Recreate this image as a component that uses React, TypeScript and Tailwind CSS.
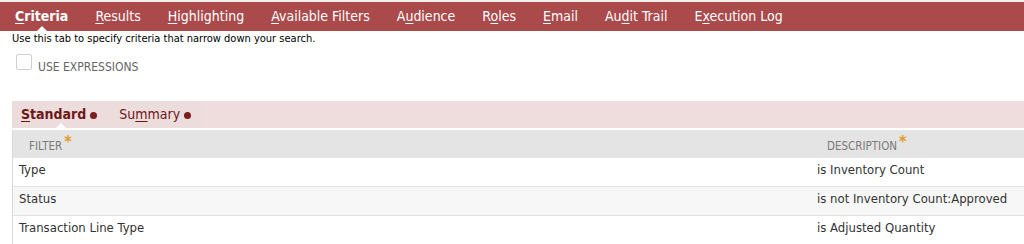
import React from "react";

const tabs: { label: string; u: number }[] = [
  { label: "Criteria", u: 0 },
  { label: "Results", u: 0 },
  { label: "Highlighting", u: 0 },
  { label: "Available Filters", u: 0 },
  { label: "Audience", u: 1 },
  { label: "Roles", u: 1 },
  { label: "Email", u: 0 },
  { label: "Audit Trail", u: 2 },
  { label: "Execution Log", u: 1 },
];

function U({ text, u }: { text: string; u: number }) {
  return (
    <>
      {text.slice(0, u)}
      <span className="underline underline-offset-2">{text[u]}</span>
      {text.slice(u + 1)}
    </>
  );
}

const rows = [
  { f: "Type", d: "is Inventory Count", bg: "bg-white" },
  { f: "Status", d: "is not Inventory Count:Approved", bg: "bg-[#f7f7f7]" },
  { f: "Transaction Line Type", d: "is Adjusted Quantity", bg: "bg-white" },
];

export default function App() {
  return (
    <div
      className="w-[1024px] h-[244px] bg-white overflow-hidden"
      style={{ fontFamily: '"DejaVu Sans Condensed", "DejaVu Sans", sans-serif' }}
    >
      <div className="h-[2px] bg-[#f6eded]" />
      <div className="h-[29px] bg-[#aa4a4b] flex items-center pl-[15px] gap-[27px] text-[14px] text-white relative whitespace-nowrap">
        {tabs.map((t, i) => (
          <span
            key={t.label}
            className={i === 0 ? "font-bold relative" : "relative"}
          >
            <U text={t.label} u={t.u} />
            {i === 0 && (
              <span className="absolute left-1/2 -translate-x-1/2 top-[20px] w-0 h-0 border-l-[6px] border-r-[6px] border-b-[6px] border-l-transparent border-r-transparent border-b-white" />
            )}
          </span>
        ))}
      </div>
      <div className="pl-[12px] pt-[1px] text-[11px] text-black leading-[13px]">
        Use this tab to specify criteria that narrow down your search.
      </div>
      <div className="flex items-center pl-[16px] mt-[9px] h-[16px]">
        <div className="w-[16px] h-[16px] border border-[#cfcfcf] rounded-[2px] bg-white" />
        <span className="ml-[6px] mt-[9px] text-[12px] text-[#666]">USE EXPRESSIONS</span>
      </div>
      <div className="ml-[12px] mt-[31px]">
        <div className="h-[27px] bg-[#efdcdc] flex items-center">
          <div className="h-full flex items-center shrink-0 whitespace-nowrap bg-[#ecdcdc] pl-[9px] w-[191px] gap-[22px] text-[14px]">
            <span className="relative font-bold text-[#6e1717]">
              <U text="Standard" u={0} />
              <span className="ml-[4px] inline-block w-[7px] h-[7px] rounded-full bg-[#7a1d1d] align-middle" />
              <span className="absolute left-[34px] top-[19px] w-0 h-0 border-l-[6px] border-r-[6px] border-b-[6px] border-l-transparent border-r-transparent border-b-white" />
            </span>
            <span className="text-[#6e1717]">
              <U text="Summary" u={2} />
              <span className="ml-[4px] inline-block w-[7px] h-[7px] rounded-full bg-[#7a1d1d] align-middle" />
            </span>
          </div>
        </div>
        <div className="h-[2px] bg-white" />
        <div className="border-l border-[#d8d8d8]">
          <div className="h-[28px] bg-[#e4e4e4] flex items-start pt-[8px] text-[11.5px] leading-[14px] text-[#7a7a7a] whitespace-nowrap">
            <div className="w-[804px] pl-[16px]">
              FILTER
              <span className="text-[#e39b2a] font-bold text-[16px] leading-[14px] relative -top-[3px] ml-[2px]">*</span>
            </div>
            <div className="pl-[10px]">
              DESCRIPTION
              <span className="text-[#e39b2a] font-bold text-[16px] leading-[14px] relative -top-[3px] ml-[2px]">*</span>
            </div>
          </div>
          {rows.map((r, i) => (
            <div
              key={r.f}
              className={`h-[29px] flex items-start pt-[4px] leading-[16px] text-[13px] text-[#333] whitespace-nowrap ${r.bg} ${i < 2 ? "border-b border-[#e2e2e2]" : ""}`}
            >
              <div className="w-[804px] pl-[6px]">{r.f}</div>
              <div>{r.d}</div>
            </div>
          ))}
        </div>
        <div className="ml-[8px] w-[190px] h-[2px] bg-[#e9f1f8]" />
      </div>
    </div>
  );
}
